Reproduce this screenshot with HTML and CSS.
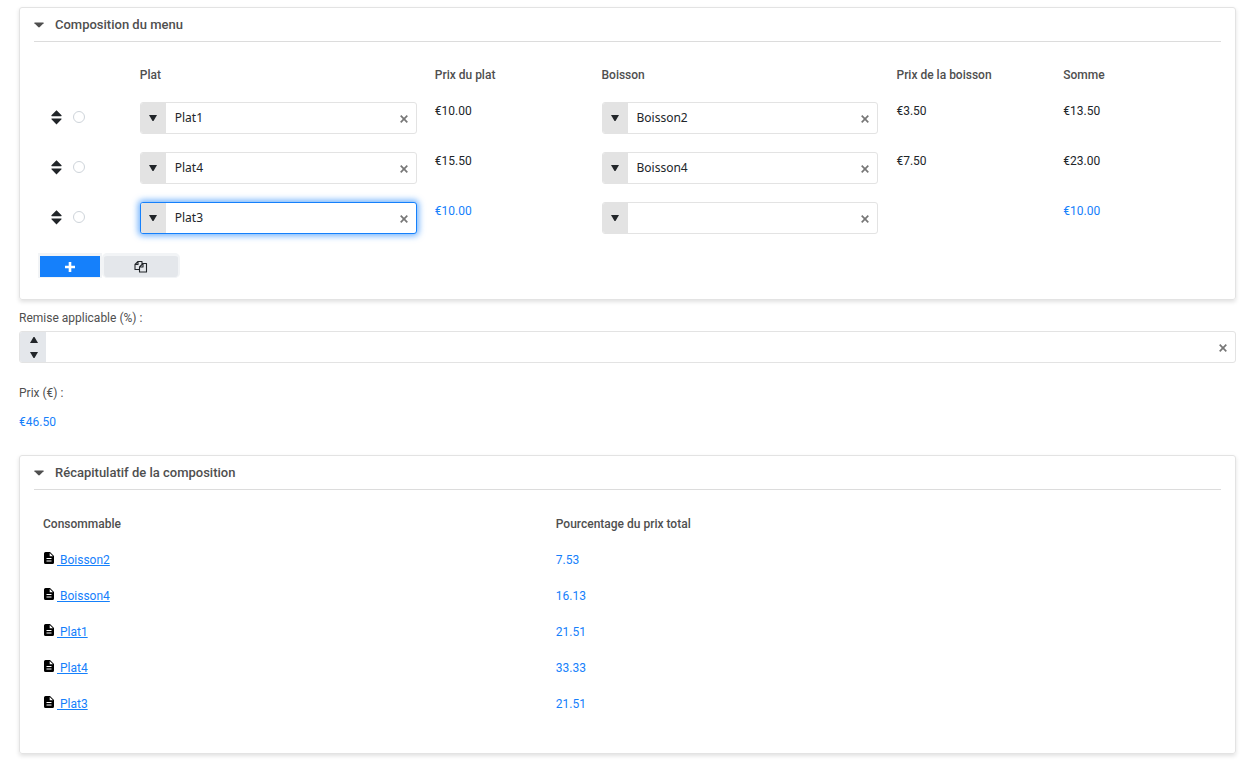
FILE: index.html
```html
<!DOCTYPE html>
<html lang="fr">
<head>
<meta charset="utf-8">
<meta name="viewport" content="width=device-width, initial-scale=1">
<title>Composition du menu</title>
<link rel="stylesheet" href="styles.css">
</head>
<body>
<svg class="sprite" aria-hidden="true">
  <symbol id="i-caret" viewBox="0 0 12 6"><path d="M1 0h10q1 0 .5 1L7 5.5q-1 .8-2 0L.5 1Q0 0 1 0z"/></symbol>
  <symbol id="i-down" viewBox="0 0 8 6"><path d="M0 0h8L4.500 6h-1z"/></symbol>
  <symbol id="i-up" viewBox="0 0 8 6"><path d="M0 6h8L4.500 0h-1z"/></symbol>
  <symbol id="i-sort" viewBox="0 0 12 16"><path d="M6 0l5.500 5.500q.4 1-.5 1H1Q0 6.500 .5 5.500zM6 15.500l5.500-5.500q.4-1-.5-1H1Q0 9 .5 10z"/></symbol>
  <symbol id="i-clear" viewBox="0 0 8 8"><path d="M.7 .7l6.600 6.600M7.300 .7L.7 7.300" fill="none" stroke="currentColor" stroke-width="1.700"/></symbol>
  <symbol id="i-plus" viewBox="0 0 10 10"><path d="M5 0v10M0 5h10" fill="none" stroke="currentColor" stroke-width="2.600"/></symbol>
  <symbol id="i-copy" viewBox="0 0 14 14"><path d="M5.500 9.500H1v-5L4 1.500h4v2.500M4 1.500v3H1M9 3.500h3.500v8.500H5.500V7zM9 3.500V7H5.500" fill="none" stroke="currentColor" stroke-width="1.100" stroke-linejoin="round"/></symbol>
  <symbol id="i-file" viewBox="0 0 10 12"><path fill-rule="evenodd" d="M1.500 0H6l4 4v6.500q0 1.500-1.500 1.500h-7Q0 12 0 10.500v-9Q0 0 1.500 0zM5.700 1v3.300H9zM2.500 6v1h5V6zM2.500 8.500v1h5v-1z"/></symbol>
</svg>
<main class="page">
  <section class="card">
    <h2 class="card-title"><button type="button" class="toggle" aria-expanded="true"><svg class="caret"><use href="#i-caret"/></svg>Composition du menu</button></h2>
    <table class="grid">
      <colgroup><col><col class="col-item"><col class="col-price"><col class="col-item"><col class="col-price"><col class="col-price"></colgroup>
      <thead>
        <tr><td></td><th scope="col">Plat</th><th scope="col">Prix du plat</th><th scope="col">Boisson</th><th scope="col">Prix de la boisson</th><th scope="col">Somme</th></tr>
      </thead>
      <tbody>
        <tr>
          <td><div class="handle"><svg class="sort"><use href="#i-sort"/></svg><input class="pick" type="radio" name="ligne" aria-label="Ligne 1"></div></td>
          <td><div class="field"><button type="button" class="drop" aria-label="Ouvrir"><svg class="arrow"><use href="#i-down"/></svg></button><input class="entry" type="text" value="Plat1" aria-label="Plat, ligne 1"><button type="button" class="clear" aria-label="Effacer"><svg class="cross"><use href="#i-clear"/></svg></button></div></td>
          <td>€10.00</td>
          <td><div class="field"><button type="button" class="drop" aria-label="Ouvrir"><svg class="arrow"><use href="#i-down"/></svg></button><input class="entry" type="text" value="Boisson2" aria-label="Boisson, ligne 1"><button type="button" class="clear" aria-label="Effacer"><svg class="cross"><use href="#i-clear"/></svg></button></div></td>
          <td>€3.50</td>
          <td>€13.50</td>
        </tr>
        <tr>
          <td><div class="handle"><svg class="sort"><use href="#i-sort"/></svg><input class="pick" type="radio" name="ligne" aria-label="Ligne 2"></div></td>
          <td><div class="field"><button type="button" class="drop" aria-label="Ouvrir"><svg class="arrow"><use href="#i-down"/></svg></button><input class="entry" type="text" value="Plat4" aria-label="Plat, ligne 2"><button type="button" class="clear" aria-label="Effacer"><svg class="cross"><use href="#i-clear"/></svg></button></div></td>
          <td>€15.50</td>
          <td><div class="field"><button type="button" class="drop" aria-label="Ouvrir"><svg class="arrow"><use href="#i-down"/></svg></button><input class="entry" type="text" value="Boisson4" aria-label="Boisson, ligne 2"><button type="button" class="clear" aria-label="Effacer"><svg class="cross"><use href="#i-clear"/></svg></button></div></td>
          <td>€7.50</td>
          <td>€23.00</td>
        </tr>
        <tr>
          <td><div class="handle"><svg class="sort"><use href="#i-sort"/></svg><input class="pick" type="radio" name="ligne" aria-label="Ligne 3"></div></td>
          <td><div class="field field-active"><button type="button" class="drop" aria-label="Ouvrir"><svg class="arrow"><use href="#i-down"/></svg></button><input class="entry" type="text" value="Plat3" aria-label="Plat, ligne 3"><button type="button" class="clear" aria-label="Effacer"><svg class="cross"><use href="#i-clear"/></svg></button></div></td>
          <td class="computed">€10.00</td>
          <td><div class="field"><button type="button" class="drop" aria-label="Ouvrir"><svg class="arrow"><use href="#i-down"/></svg></button><input class="entry" type="text" aria-label="Boisson, ligne 3"><button type="button" class="clear" aria-label="Effacer"><svg class="cross"><use href="#i-clear"/></svg></button></div></td>
          <td></td>
          <td class="computed">€10.00</td>
        </tr>
      </tbody>
    </table>
    <div class="actions">
      <button type="button" class="action action-add" aria-label="Ajouter"><svg class="plus"><use href="#i-plus"/></svg></button>
      <button type="button" class="action action-copy" aria-label="Dupliquer"><svg class="copy"><use href="#i-copy"/></svg></button>
    </div>
  </section>

  <div class="group group-discount">
    <label class="label" for="remise">Remise applicable (%) :</label>
    <div class="field">
      <div class="spin">
        <button type="button" class="step" aria-label="Augmenter"><svg class="arrow"><use href="#i-up"/></svg></button>
        <button type="button" class="step" aria-label="Diminuer"><svg class="arrow"><use href="#i-down"/></svg></button>
      </div>
      <input class="entry" id="remise" type="text" inputmode="numeric">
      <button type="button" class="clear" aria-label="Effacer"><svg class="cross"><use href="#i-clear"/></svg></button>
    </div>
  </div>

  <div class="group group-total">
    <label class="label" for="prix">Prix (€) :</label>
    <output class="computed" id="prix">€46.50</output>
  </div>

  <section class="card card-summary">
    <h2 class="card-title"><button type="button" class="toggle" aria-expanded="true"><svg class="caret"><use href="#i-caret"/></svg>Récapitulatif de la composition</button></h2>
    <table class="grid">
      <colgroup><col class="col-name"><col></colgroup>
      <thead><tr><th scope="col">Consommable</th><th scope="col">Pourcentage du prix total</th></tr></thead>
      <tbody class="computed">
        <tr><td><svg class="file"><use href="#i-file"/></svg><a class="link" href="#">&nbsp;Boisson2</a></td><td>7.53</td></tr>
        <tr><td><svg class="file"><use href="#i-file"/></svg><a class="link" href="#">&nbsp;Boisson4</a></td><td>16.13</td></tr>
        <tr><td><svg class="file"><use href="#i-file"/></svg><a class="link" href="#">&nbsp;Plat1</a></td><td>21.51</td></tr>
        <tr><td><svg class="file"><use href="#i-file"/></svg><a class="link" href="#">&nbsp;Plat4</a></td><td>33.33</td></tr>
        <tr><td><svg class="file"><use href="#i-file"/></svg><a class="link" href="#">&nbsp;Plat3</a></td><td>21.51</td></tr>
      </tbody>
    </table>
  </section>
</main>
</body>
</html>
```
FILE: styles.css
```css
* { box-sizing: border-box; }

body {
  margin: 0;
  background: #fff;
  color: #212529;
  font: 12px/18px Roboto, "Liberation Sans", sans-serif;
}

button { margin: 0; padding: 0; border: 0; background: none; color: inherit; font: inherit; cursor: pointer; }
svg { display: block; flex: none; fill: currentColor; }

.sprite { position: absolute; width: 0; height: 0; }

.page { padding: 7px 11px 24px 19px; }

.card {
  padding: 0 14px 21px;
  border: 1px solid #e3e3e3;
  border-radius: 3px;
  box-shadow: 0 2px 4px rgba(0, 0, 0, 0.12);
}

.card-title {
  margin: 0 0 15px;
  padding: 7px 0 6px;
  border-bottom: 1px solid #dcdcdc;
  font-size: 13px;
  line-height: 20px;
  font-weight: 500;
  color: #4f4f4f;
}
.card-summary { padding-bottom: 31px; }
.card-summary .card-title { margin-bottom: 16px; }
.toggle { display: flex; align-items: center; gap: 11px; }
.caret { width: 10px; height: 6px; }

.grid { width: 100%; table-layout: fixed; border-collapse: collapse; }
.grid th, .grid td { padding: 9px; text-align: left; vertical-align: top; }
.grid th { font-weight: 500; color: #4f4f4f; }
.col-item { width: 24.85%; }
.col-price { width: 14.05%; }
.col-name { width: 43.2%; }

.computed { color: #1580fb; }

.handle { display: flex; align-items: center; gap: 11px; height: 30px; padding-left: 8px; }
.sort { width: 11px; height: 15px; }
.pick {
  appearance: none;
  width: 12px;
  height: 12px;
  margin: 0;
  border: 1px solid #ced4da;
  border-radius: 50%;
  background: #fff;
}

.field {
  display: flex;
  height: 32px;
  border: 1px solid #e3e3e3;
  border-radius: 3px;
  background: #fff;
}
.field-active { border-color: #1580fb; box-shadow: 0 0 6px 2px rgba(21, 128, 251, 0.6); }
.drop { display: flex; align-items: center; justify-content: center; width: 25px; border-radius: 2px 0 0 2px; background: #e3e3e3; }
.arrow { width: 8px; height: 6px; }
.entry {
  flex: 1;
  min-width: 0;
  padding: 0 9px;
  border: 0;
  outline: 0;
  background: none;
  color: #212529;
  font: 12px/18px "Noto Sans", sans-serif;
}
.clear { display: flex; align-items: center; justify-content: center; width: 24px; padding-top: 2px; color: #777; }
.cross { width: 8px; height: 8px; }

.spin { display: flex; flex-direction: column; justify-content: space-between; width: 26px; padding: 5px 0 4px; border-radius: 2px 0 0 2px; background: #e4e7eb; }
.step { display: flex; justify-content: center; padding-left: 2px; }

.actions { display: flex; margin-top: 10px; padding: 0 4px; }
.action { display: flex; align-items: center; justify-content: center; height: 25px; border: solid #f2f4f6; border-width: 3px 2px 1px; }
.action-add { width: 64px; background: #1580fb; color: #fff; }
.action-copy { width: 78px; border-radius: 5px; background: #e4e7eb; }
.plus { width: 10px; height: 10px; }
.copy { width: 14px; height: 14px; }

.label { display: block; color: #4f4f4f; }
.group-discount { margin-top: 9px; }
.group-discount .label { margin-bottom: 4px; }
.group-total { display: grid; gap: 11px; margin: 21px 0 24px; }

.file { display: inline-block; width: 10px; height: 12px; margin: 0 3px 0 1px; vertical-align: 0; color: #000; }
.link { color: inherit; text-decoration: underline; }
```
